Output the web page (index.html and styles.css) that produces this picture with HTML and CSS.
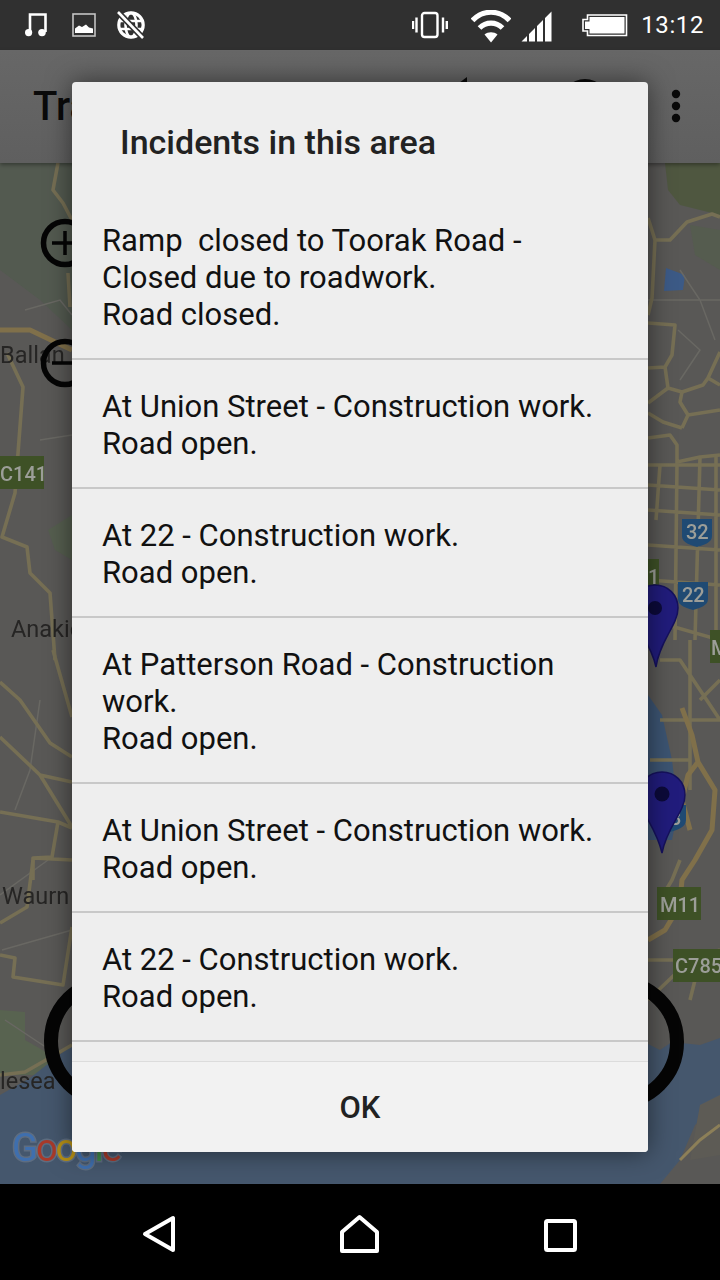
FILE: index.html
```html
<!DOCTYPE html>
<html lang="en">

<head>
    <meta charset="UTF-8">
    <meta name="viewport" content="width=device-width, initial-scale=1.0">
    <title>Incidents</title>
    <link rel="stylesheet" href="styles.css">
</head>

<body>
    <div class="screen">
        <div class="status-bar">
            <div class="status-left">
                <svg class="icon-music" width="24" height="26" viewBox="0 0 24 26">
                    <path d="M6 20V2.5H21.5V20M6 2.5H21.5" fill="none" stroke="#fff" stroke-width="2.6" />
                    <ellipse cx="4.6" cy="20.6" rx="3.6" ry="3.6" fill="#fff" />
                    <ellipse cx="18" cy="20.6" rx="3.8" ry="3.6" fill="#fff" />
                </svg>
                <svg class="icon-picture" width="24" height="24" viewBox="0 0 24 24">
                    <rect x="1" y="1" width="22" height="22" fill="none" stroke="#c4c4c4" stroke-width="1.6" />
                    <path d="M3 20V15.5L7 12.5L10 14L14 11.5L17 14.5L21 15.5V20Z" fill="#fff" />
                </svg>
                <svg class="icon-globe" width="30" height="30" viewBox="0 0 30 30">
                    <circle cx="15" cy="15" r="12.2" fill="none" stroke="#fff" stroke-width="3.2" />
                    <ellipse cx="15" cy="15" rx="5.5" ry="12" fill="none" stroke="#fff" stroke-width="2.6" />
                    <path d="M3 11H27M3 19H27" stroke="#fff" stroke-width="2.6" />
                    <path d="M2 2L27 28" stroke="#303030" stroke-width="6" />
                    <path d="M2 2L27 28" stroke="#fff" stroke-width="2.6" />
                </svg>
            </div>
            <div class="status-right">
                <svg class="icon-vibrate" width="36" height="28" viewBox="0 0 36 28">
                    <rect x="10" y="2" width="15.5" height="24" rx="2.5" fill="none" stroke="#fff" stroke-width="2.4" />
                    <path d="M4.5 6.5V21.5M1 10V18M31 6.5V21.5M34.8 10V18" stroke="#fff" stroke-width="2.4" />
                </svg>
                <svg class="icon-wifi" width="40" height="34" viewBox="0 0 40 34">
                    <path d="M1.5 10.5C12 -0.5 28 -0.5 38.5 10.5" fill="none" stroke="#fff" stroke-width="5.2" />
                    <path d="M8.5 18C15 11.5 25 11.5 31.5 18" fill="none" stroke="#fff" stroke-width="5.2" />
                    <path d="M20 32.5L13.5 24.5C17 21.5 23 21.5 26.5 24.5Z" fill="#fff" />
                </svg>
                <svg class="icon-signal" width="31" height="31" viewBox="0 0 31 31">
                    <path d="M0.5 30.5L6 25V30.5ZM8 23V30.5H14V17ZM16 15V30.5H22V9ZM24 7V30.5H30.5V0.5Z" fill="#fff" />
                </svg>
                <svg class="icon-battery" width="46" height="24" viewBox="0 0 46 24">
                    <path d="M5.5 2H44.5V22.5H5.5V18H1V6.5H5.5Z" fill="none" stroke="#fff" stroke-width="1.6" />
                    <path d="M7.5 4H42.5V20.5H7.5V16H3V8.5H7.5Z" fill="#fff" />
                </svg>
                <span class="status-time">13:12</span>
            </div>
        </div>

        <div class="app-bar">
            <span class="app-title">Traffic</span>
            <svg class="app-actions" width="300" height="113" viewBox="0 0 300 113">
                <path d="M47 27L39 33H47Z" fill="#0a0a0a" />
                <circle cx="165" cy="54" r="25" fill="#0a0a0a" />
                <circle cx="256" cy="44" r="4.2" fill="#0a0a0a" />
                <circle cx="256" cy="56" r="4.2" fill="#0a0a0a" />
                <circle cx="256" cy="68" r="4.2" fill="#0a0a0a" />
            </svg>
        </div>

        <div class="map">
            <svg class="map-canvas" width="720" height="1021" viewBox="0 163 720 1021">
                <rect x="0" y="163" width="720" height="1021" fill="#595856" />

                <!-- parks -->
                <path d="M0 163H72V330L40 300L0 270Z" fill="#535a50" />
                <path d="M665 163H720V215L700 210L680 205L668 190Z" fill="#4f5740" />
                <path d="M690 225L720 230V270L695 255Z" fill="#555c4f" />
                <path d="M0 1010L25 1012L25 1040L60 1060L72 1050V1075H0Z" fill="#586350" />
                <path d="M48 530L72 515V560L55 550Z" fill="#555e4f" />

                <!-- water -->
                <path d="M0 1095L30 1078L72 1045L200 1040H640L660 1050L672 1042L700 1045L720 1038V1105L695 1125L680 1160L660 1184H0Z" fill="#45576d" />
                <path d="M648 695L662 715L672 760L678 810L672 840L648 840Z" fill="#3c5472" />
                <path d="M666 268L685 275L683 290L664 291Z" fill="#3c5a86" />
                <path d="M700 1105L720 1095V1155L690 1160Z" fill="#5d5b55" />
                <path d="M680 1160L700 1140L720 1125" fill="none" stroke="#8c7f58" stroke-width="3" />

                <!-- minor roads -->
                <g fill="none" stroke="#696863" stroke-width="1.5">
                    <path d="M5 1020L35 1040L58 1055M25 310L60 300L72 315M40 440L72 435M2 950L72 930" />
                    <path d="M648 300H720M680 270L700 300L715 340M678 330L700 350L680 380" />
                    <path d="M48 860L0 895M40 700L30 770L15 810" />
                </g>

                <!-- roads -->
                <g fill="none" stroke="#766f54" stroke-width="3.6" stroke-linejoin="round">
                    <path d="M58 163L53 190L63 203L72 220M68 273L70 307" />
                    <path d="M7 353L23 387L15 493L2 537L27 547L30 573L50 593L55 660" />
                    <path d="M53 650L72 717M0 682L20 700L50 743L72 757M0 737L40 775L72 782M40 775L72 827M0 812L58 822L72 828M58 822L52 857L33 858L33 880M33 858L72 860" />
                    <path d="M33 860L27 907L0 923M0 955L15 958L13 977L63 985L72 927M0 1075L25 1072L72 1045" />
                    <path d="M648 218L655 240L670 240L687 222L712 214L720 217M655 240L652 298L648 315" />
                    <path d="M648 323L675 325L672 355L665 367L648 368M665 367L668 388L682 392L703 385L708 378L720 352M708 378L720 385M668 388L648 403" />
                    <path d="M682 392L680 402L688 415L682 428M688 415L720 410M648 413L663 422L682 428M648 438L670 435L677 445L677 465M677 462L700 457L720 455" />
                    <path d="M648 465H720M648 485L720 490M648 510L720 515M648 545L720 550M648 580L720 585M660 465L656 520M677 465L675 640M700 457L695 640M716 455V640M650 620L720 640" />
                    <path d="M660 660L680 660L720 720M690 640L690 790M660 720H720M650 760H690M700 700L720 680" />
                    <path d="M680 860L672 880L660 900M648 1000L690 960L720 950M700 960L690 1000M648 960H690" />
                </g>
                <g fill="none" stroke="#80704a" stroke-width="5" stroke-linejoin="round">
                    <path d="M0 330L30 330L72 350" />
                    <path d="M682 708L692 735L698 762L715 790L712 830L695 860L682 880L680 900M698 762L688 775L682 800L690 830" />
                    <path d="M648 940L665 930L680 905" />
                </g>

                <!-- road signs -->
                <g font-family="Roboto, sans-serif" font-size="20" font-weight="500" fill="#9c9e98">
                    <rect x="0" y="456" width="44" height="33" fill="#3e5126" />
                    <text x="0" y="481">C141</text>
                    <rect x="648" y="559" width="11" height="54" fill="#3e5126" />
                    <text x="648" y="584">1</text>
                    <rect x="710" y="630" width="12" height="33" fill="#3e5126" />
                    <text x="711" y="655">M</text>
                    <rect x="657" y="887" width="44" height="33" fill="#3e5126" />
                    <text x="660" y="912">M11</text>
                    <rect x="673" y="949" width="47" height="33" fill="#3e5126" />
                    <text x="675" y="973">C785</text>
                    <path d="M682 519H712V536C712 543 703 545 697 547C691 545 682 543 682 536Z" fill="#1f4a73" />
                    <text x="686" y="539">32</text>
                    <path d="M678 582H708V599C708 606 699 608 693 610C687 608 678 606 678 599Z" fill="#1f4a73" />
                    <text x="682" y="602">22</text>
                    <path d="M665 805H686V820C686 828 676 830 670 832C664 830 665 820 665 815Z" fill="#1f4a73" />
                    <text x="670" y="825">3</text>
                </g>

                <!-- place names -->
                <g font-family="Roboto, sans-serif" font-size="23.5" fill="#262524">
                    <text x="0" y="363">Ballan</text>
                    <text x="11" y="637">Anakie</text>
                    <text x="2" y="904">Waurn Ponds</text>
                    <text x="0" y="1089">lesea</text>
                </g>

                <!-- zoom and round buttons -->
                <g fill="none" stroke="#050505">
                    <circle cx="65" cy="243" r="21.5" stroke-width="5.5" />
                    <path d="M52 243H78M65 231V255" stroke-width="3.5" />
                    <circle cx="65" cy="363" r="21.5" stroke-width="5.5" />
                    <path d="M52 363H78" stroke-width="3.5" />
                    <circle cx="111" cy="1041" r="60" stroke-width="14" />
                    <circle cx="617" cy="1042" r="60" stroke-width="14" />
                </g>

                <!-- pins -->
                <path d="M655 585C642 585 632 595 632 608C632 625 650 640 656 667C660 640 678 625 678 608C678 595 668 585 655 585Z" fill="#211c7c" stroke="#15115c" stroke-width="1.5" />
                <circle cx="655" cy="608" r="7" fill="#0c0a3a" />
                <path d="M662 772C649 772 639 782 639 795C639 812 656 826 662 853C667 826 685 812 685 795C685 782 675 772 662 772Z" fill="#211c7c" stroke="#15115c" stroke-width="1.5" />
                <circle cx="662" cy="794" r="7.5" fill="#0c0a3a" />

                <!-- logo -->
                <g font-family="Roboto, sans-serif" font-size="38" letter-spacing="-2" stroke="#8b97a6" stroke-width="3" paint-order="stroke" stroke-opacity="0.35">
                    <text x="12" y="1161"><tspan fill="#3f6fae">G</tspan><tspan fill="#a83a2a">o</tspan><tspan fill="#b58f15">o</tspan><tspan fill="#3f6fae">g</tspan><tspan fill="#3f8a48">l</tspan><tspan fill="#a83a2a">e</tspan></text>
                </g>
            </svg>
        </div>

        <div class="nav-bar">
            <svg width="40" height="44" viewBox="0 0 40 44">
                <path d="M6 20L34 4V36Z" fill="none" stroke="#fff" stroke-width="4" stroke-linejoin="round" />
            </svg>
            <svg width="44" height="44" viewBox="0 0 44 44">
                <path d="M4 18L21.5 3L39 18V37H4Z" fill="none" stroke="#fff" stroke-width="4" stroke-linejoin="round" />
            </svg>
            <svg width="40" height="44" viewBox="0 0 40 44">
                <rect x="5" y="7" width="29" height="29" rx="1.5" fill="none" stroke="#fff" stroke-width="4" />
            </svg>
        </div>

        <div class="dialog">
            <h2 class="dialog-title">Incidents in this area</h2>
            <div class="incident-list">
                <div class="incident">Ramp  closed to Toorak Road -<br>Closed due to roadwork.<br>Road closed.</div>
                <div class="incident">At Union Street - Construction work.<br>Road open.</div>
                <div class="incident">At 22 - Construction work.<br>Road open.</div>
                <div class="incident">At Patterson Road - Construction work.<br>Road open.</div>
                <div class="incident">At Union Street - Construction work.<br>Road open.</div>
                <div class="incident">At 22 - Construction work.<br>Road open.</div>
            </div>
            <div class="dialog-actions">
                <button class="dialog-ok" type="button">OK</button>
            </div>
        </div>
    </div>
</body>

</html>
```

FILE: styles.css
```css
/* General Body Styling */
body {
    margin: 0;
    background: #000;
    font-family: Roboto, sans-serif;
}

.screen {
    position: relative;
    width: 720px;
    height: 1280px;
    overflow: hidden;
    display: flex;
    flex-direction: column;
}

/* Status Bar */
.status-bar {
    height: 50px;
    flex: none;
    background: #303030;
    display: flex;
    justify-content: space-between;
    align-items: center;
    color: #fff;
}

.status-left {
    display: flex;
    align-items: center;
    padding-left: 24px;
}

.status-right {
    display: flex;
    align-items: center;
    padding-right: 16px;
}

.icon-picture {
    margin-left: 24px;
}

.icon-globe {
    margin-left: 20px;
}

.icon-vibrate {
    margin-right: 23px;
}

.icon-wifi {
    margin-right: 10px;
    margin-top: 4px;
}

.icon-signal {
    margin-right: 30px;
    margin-top: 2px;
}

.icon-battery {
    margin-right: 13px;
}

.status-time {
    font-size: 24px;
    letter-spacing: 0.6px;
}

/* App Bar */
.app-bar {
    height: 113px;
    flex: none;
    background: linear-gradient(#676767, #5f5f5f);
    display: flex;
    align-items: center;
    justify-content: space-between;
    padding-left: 33px;
    box-sizing: border-box;
    position: relative;
    z-index: 1;
    box-shadow: 0 2px 4px rgba(0, 0, 0, 0.35);
}

.app-title {
    font-size: 40px;
    font-weight: 500;
    color: #0a0a0a;
}

/* Map */
.map {
    flex: 1;
    min-height: 0;
    overflow: hidden;
}

.map-canvas {
    display: block;
    filter: blur(0.7px);
}

/* Nav Bar */
.nav-bar {
    height: 96px;
    flex: none;
    background: #000;
    display: flex;
    align-items: center;
    justify-content: space-between;
    padding: 8px 139px 0 139px;
    box-sizing: border-box;
}

/* Dialog */
.dialog {
    position: absolute;
    left: 72px;
    top: 82px;
    width: 576px;
    height: 1070px;
    border-radius: 4px;
    background: #eee;
    box-shadow: 0 0 26px rgba(0, 0, 0, 0.5);
    display: flex;
    flex-direction: column;
    overflow: hidden;
    z-index: 2;
}

.dialog-title {
    height: 112px;
    flex: none;
    margin: 0;
    padding: 39px 0 0 48px;
    box-sizing: border-box;
    font-size: 34px;
    line-height: 42px;
    font-weight: 500;
    color: #222;
}

.incident-list {
    flex: 1;
    min-height: 0;
    overflow: hidden;
}

.incident {
    padding: 28px 30px 25px 30px;
    border-bottom: 2px solid #c8c8c8;
    font-size: 31px;
    line-height: 37px;
    color: #111;
    white-space: pre-wrap;
}

.dialog-actions {
    height: 91px;
    flex: none;
    background: #f2f2f2;
    border-top: 1px solid #dcdcdc;
    box-sizing: border-box;
}

.dialog-ok {
    width: 100%;
    height: 100%;
    padding: 0;
    border: none;
    background: none;
    font-family: Roboto, sans-serif;
    font-size: 31px;
    font-weight: 500;
    color: #222;
}
```
